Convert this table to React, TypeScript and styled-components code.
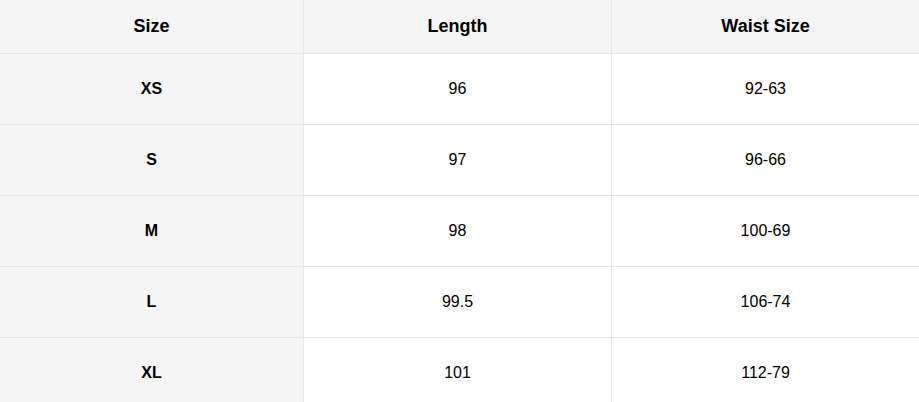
import styled, { createGlobalStyle } from "styled-components";

const GlobalStyle = createGlobalStyle`
  body {
    margin: 0;
    background: #fff;
    font-family: "Liberation Sans", Arial, sans-serif;
  }
`;

const Table = styled.div`
  display: grid;
  grid-template-columns: 303px 308px 308px;
  width: 919px;
  color: #000;
`;

const Cell = styled.div<{ $head?: boolean; $first?: boolean }>`
  display: flex;
  align-items: center;
  justify-content: center;
  height: ${(p) => (p.$head ? "53px" : "70px")};
  border-bottom: 1px solid #e6e6e6;
  border-left: ${(p) => (p.$first ? "none" : "1px solid #e6e6e6")};
  background-color: ${(p) => (p.$head || p.$first ? "#f5f5f5" : "#fff")};
  font-size: ${(p) => (p.$head ? "18px" : "16px")};
  font-weight: ${(p) => (p.$head || p.$first ? 700 : 400)};
`;

const rows = [
  ["XS", "96", "92-63"],
  ["S", "97", "96-66"],
  ["M", "98", "100-69"],
  ["L", "99.5", "106-74"],
  ["XL", "101", "112-79"],
];

export default function App() {
  return (
    <>
      <GlobalStyle />
      <Table>
        {["Size", "Length", "Waist Size"].map((h, i) => (
          <Cell key={h} $head $first={i === 0}>
            {h}
          </Cell>
        ))}
        {rows.map((row) =>
          row.map((v, i) => (
            <Cell key={row[0] + i} $first={i === 0}>
              {v}
            </Cell>
          ))
        )}
      </Table>
    </>
  );
}
